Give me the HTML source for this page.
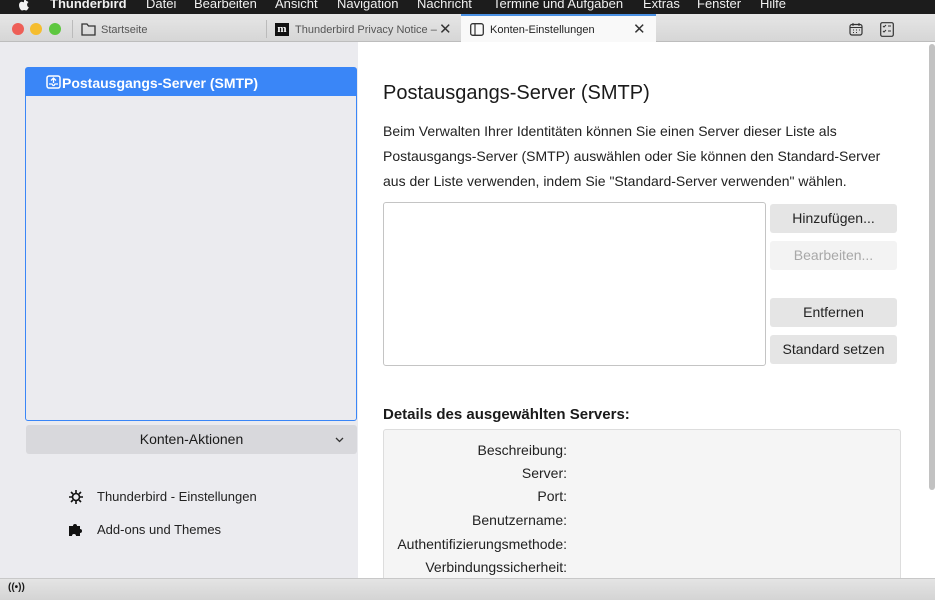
<!DOCTYPE html>
<html><head><meta charset="utf-8"><style>
*{box-sizing:border-box;margin:0;padding:0}
body{width:935px;height:600px;overflow:hidden;position:relative;font-family:"Liberation Sans",sans-serif;background:#fff;color:#1a1a1a}
.abs{position:absolute}
#menubar{left:0;top:0;width:935px;height:14px;background:#1c1c1c;color:#f0f0f0;font-size:13px;font-weight:bold;white-space:nowrap;overflow:hidden}
#menubar span{position:absolute;top:-4px}
#tabbar{left:0;top:14px;width:935px;height:28px;background:linear-gradient(#e6e6e6,#d6d6d6);border-bottom:1px solid #bdbdbd}
.dot{width:12px;height:12px;border-radius:50%;top:9px}
.tab{top:2px;height:28px;font-size:11px;color:#555;line-height:28px}
#side{left:0;top:42px;width:358px;height:536px;background:#ebebef}
#list{left:25px;top:67px;width:332px;height:354px;border:1.5px solid #3a86f7;border-radius:3px;background:#ebebef}
#listhead{left:0;top:0;width:100%;height:28px;background:#3a86f7;color:#fff;font-weight:bold;font-size:14px;line-height:30px;padding-left:36px}
#aktion{left:26px;top:425px;width:331px;height:29px;background:#d8d8dc;border-radius:3px;text-align:center;line-height:29px;font-size:14px}
.link{left:97px;font-size:13px;color:#222}
#main{left:358px;top:42px;width:577px;height:536px;background:#fff}
h1{position:absolute;left:383px;top:82px;font-size:20px;font-weight:normal;color:#1a1a1a}
.p{left:383px;font-size:14px;color:#222;white-space:nowrap}
#box{left:383px;top:202px;width:383px;height:164px;border:1px solid #c4c4c4;border-radius:3px;background:#fff}
.btn{left:770px;width:127px;height:29px;background:#e5e5e5;border-radius:3px;text-align:center;line-height:29px;font-size:14px;color:#222}
#det{left:383px;top:429px;width:518px;height:160px;background:#f5f5f5;border:1px solid #ddd;border-radius:3px}
.lbl{right:368px;font-size:14px;color:#222;text-align:right}
#status{left:0;top:578px;width:935px;height:22px;background:linear-gradient(#e4e4e4,#d4d4d4);border-top:1px solid #c8c8c8}
#scroll{left:929px;top:44px;width:6px;height:446px;background:#c2c2c2;border-radius:3px}
</style></head><body>
<div id="menubar" class="abs">
<svg class="abs" style="left:17px;top:-3px" width="14" height="14"><path d="M9.5 1.5c-.9.1-1.8.7-2.2 1.5-.3.6-.4 1.3-.3 1.7.9 0 1.8-.6 2.2-1.4.3-.6.4-1.2.3-1.8zM7 5.3c-.8 0-1.5-.5-2.3-.5C3.4 4.8 2 6 2 8.3c0 2.6 1.8 5.2 3.1 5.2.8 0 1.1-.5 2-.5s1.2.5 2 .5c1.2 0 2.3-2 2.7-3.2-1.3-.5-1.8-1.9-1.7-3 .1-.9.6-1.7 1.3-2.1-.6-.9-1.6-1.3-2.5-1.3-.8 0-1.4.5-1.9.4z" fill="#f0f0f0"/></svg>
<span style="left:50px">Thunderbird</span><span style="left:146px;font-weight:normal">Datei</span><span style="left:194px;font-weight:normal">Bearbeiten</span><span style="left:275px;font-weight:normal">Ansicht</span><span style="left:337px;font-weight:normal">Navigation</span><span style="left:417px;font-weight:normal">Nachricht</span><span style="left:493px;font-weight:normal">Termine und Aufgaben</span><span style="left:643px;font-weight:normal">Extras</span><span style="left:697px;font-weight:normal">Fenster</span><span style="left:760px;font-weight:normal">Hilfe</span>
</div>
<div id="tabbar" class="abs">
<div class="abs dot" style="left:12px;background:#ee5f57"></div>
<div class="abs dot" style="left:30px;background:#f5bd2f"></div>
<div class="abs dot" style="left:49px;background:#5ec740"></div>
<div class="abs" style="left:72px;top:6px;width:1px;height:18px;background:#bbb"></div>
<svg class="abs" style="left:81px;top:9px" width="15" height="13"><path d="M1 1h5l1.5 2H14v9H1z" fill="none" stroke="#333" stroke-width="1.3"/></svg>
<div class="abs tab" style="left:101px">Startseite</div>
<div class="abs" style="left:266px;top:6px;width:1px;height:18px;background:#bbb"></div>
<div class="abs" style="left:275px;top:9px;width:14px;height:13px;background:#111;color:#fff;font:bold 11px 'Liberation Serif',serif;text-align:center;line-height:12px">m</div>
<div class="abs tab" style="left:295px">Thunderbird Privacy Notice –</div>
<div class="abs tab" style="left:439px;font-size:15px;color:#333">✕</div>
<div class="abs" style="left:461px;top:0;width:195px;height:29px;background:#f9f9f9;border-top:2px solid #4a90e2"></div>
<svg class="abs" style="left:470px;top:9px" width="14" height="13"><rect x="0.7" y="0.7" width="12.6" height="11.6" rx="2" fill="none" stroke="#333" stroke-width="1.3"/><path d="M5 1v11" stroke="#333" stroke-width="1.2"/></svg>
<div class="abs tab" style="left:490px;color:#222">Konten-Einstellungen</div>
<div class="abs tab" style="left:633px;font-size:15px;color:#333">✕</div>
<svg class="abs" style="left:849px;top:8px" width="14" height="14"><rect x="1" y="2.5" width="12" height="10.5" rx="2" fill="none" stroke="#333" stroke-width="1.2"/><path d="M4 1v3M10 1v3M1 5.5h12" stroke="#333"/><path d="M4 8h1M7 8h1M10 8h1M4 10.5h1M7 10.5h1" stroke="#333"/></svg>
<svg class="abs" style="left:880px;top:8px" width="14" height="15"><rect x="0.7" y="0.7" width="12.6" height="13.6" rx="1.5" fill="none" stroke="#333" stroke-width="1.2"/><path d="M3 4l1 1 2-2M3 9l1 1 2-2M8 4h3M8 9h3" stroke="#333" fill="none"/></svg>
</div>
<div id="side" class="abs"></div>
<div id="list" class="abs"><div id="listhead" class="abs">Postausgangs-Server (SMTP)</div>
<svg class="abs" style="left:20px;top:7px" width="15" height="14"><rect x="1" y="1" width="13" height="12" rx="2" fill="none" stroke="#fff" stroke-width="1.5"/><path d="M7.5 3v5M5 5.5l2.5-2.5 2.5 2.5M3 9h3l1 1.5h1l1-1.5h3" stroke="#fff" fill="none" stroke-width="1.3"/></svg>
</div>
<div id="aktion" class="abs">Konten-Aktionen<svg style="position:absolute;right:13px;top:12px" width="9" height="6"><path d="M1 1l3.5 3.5L8 1" stroke="#333" fill="none" stroke-width="1.3"/></svg></div>
<svg class="abs" style="left:68px;top:489px" width="16" height="16"><circle cx="8" cy="8" r="3.5" fill="none" stroke="#111" stroke-width="1.6"/><path d="M8 1v3M8 12v3M1 8h3M12 8h3M3 3l2 2M11 11l2 2M13 3l-2 2M5 11l-2 2" stroke="#111" stroke-width="1.6"/></svg>
<div class="abs link" style="top:489px">Thunderbird - Einstellungen</div>
<svg class="abs" style="left:68px;top:521px" width="17" height="16"><path d="M1 5h4a2 2 0 1 1 4 0h3v3a2 2 0 1 1 0 4v3H8a2 2 0 1 0-4 0H1z" fill="#111"/></svg>
<div class="abs link" style="top:522px">Add-ons und Themes</div>
<div id="main" class="abs"></div>
<h1>Postausgangs-Server (SMTP)</h1>
<div class="abs p" style="top:123px">Beim Verwalten Ihrer Identitäten können Sie einen Server dieser Liste als</div>
<div class="abs p" style="top:148px">Postausgangs-Server (SMTP) auswählen oder Sie können den Standard-Server</div>
<div class="abs p" style="top:173px">aus der Liste verwenden, indem Sie "Standard-Server verwenden" wählen.</div>
<div id="box" class="abs"></div>
<div class="abs btn" style="top:204px">Hinzufügen...</div>
<div class="abs btn" style="top:241px;background:#f3f3f3;color:#a8a8a8">Bearbeiten...</div>
<div class="abs btn" style="top:298px">Entfernen</div>
<div class="abs btn" style="top:335px">Standard setzen</div>
<div class="abs" style="left:383px;top:406px;font-size:15px;font-weight:bold;color:#1a1a1a">Details des ausgewählten Servers:</div>
<div id="det" class="abs"></div>
<div class="abs lbl" style="top:442px">Beschreibung:</div>
<div class="abs lbl" style="top:465px">Server:</div>
<div class="abs lbl" style="top:488px">Port:</div>
<div class="abs lbl" style="top:512px">Benutzername:</div>
<div class="abs lbl" style="top:536px">Authentifizierungsmethode:</div>
<div class="abs lbl" style="top:559px">Verbindungssicherheit:</div>
<div id="scroll" class="abs"></div>
<div id="status" class="abs"><div class="abs" style="left:8px;top:3px;font-size:10px;font-weight:bold">((•))</div></div>
</body></html>
